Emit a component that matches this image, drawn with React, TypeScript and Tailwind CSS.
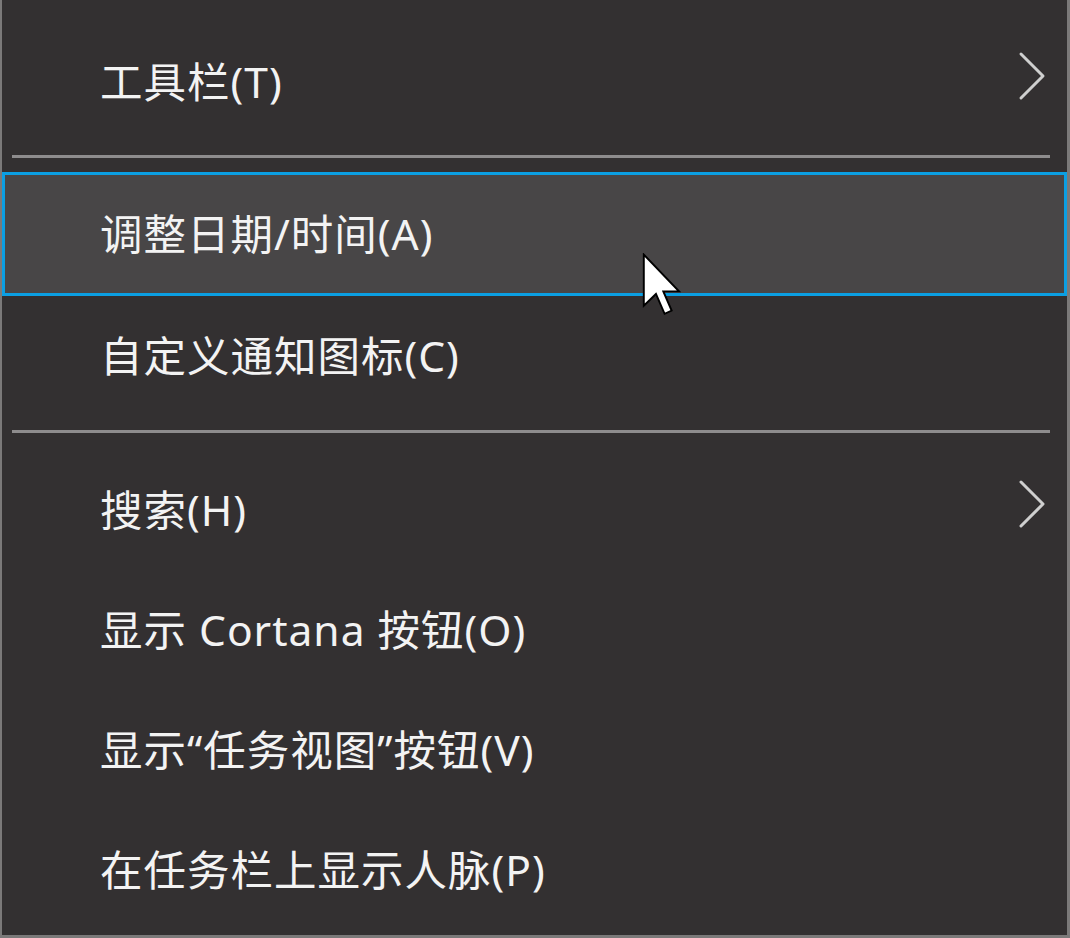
import React from "react";

const font = {
  fontFamily: '"Noto Sans", "Noto Sans CJK SC", sans-serif',
};

type Item = { label: string; sub?: boolean; active?: boolean };

const Chevron: React.FC = () => (
  <svg width="30" height="50" viewBox="0 0 30 50" fill="none">
    <path
      d="M4 3 L26 25 L4 47"
      stroke="#cfcfcf"
      strokeWidth="3"
      strokeLinecap="round"
      strokeLinejoin="round"
    />
  </svg>
);

const Separator: React.FC<{ top: string }> = ({ top }) => (
  <div className={`${top} pl-[10px] pr-[17px]`}>
    <div className="w-full h-[3px] bg-[#8e8c8d]" />
  </div>
);

const Row: React.FC<{ item: Item }> = ({ item }) => (
  <div
    className={
      item.active
        ? "h-[124px] flex items-center justify-between pl-[95px] pr-[17px] bg-[#484647] border-[3px] border-[#0b9fe3]"
        : "h-[120px] flex items-center justify-between pl-[98px] pr-[20px]"
    }
  >
    <span className="text-[42.5px] leading-none text-[#f3f3f3] whitespace-nowrap tracking-[1px]">
      {item.label}
    </span>
    {item.sub && (
      <span className="-mt-[12px]">
        <Chevron />
      </span>
    )}
  </div>
);

export default function App() {
  return (
    <div
      className="relative w-[1070px] h-[938px] bg-[#333031] border-l-2 border-r-[3px] border-b-[3px] border-[#7b7979] pt-[22px] overflow-hidden"
      style={font}
    >
      <Row item={{ label: "工具栏(T)", sub: true }} />
      <Separator top="h-[30px] pt-[13px]" />
      <Row item={{ label: "调整日期/时间(A)", active: true }} />
      <Row item={{ label: "自定义通知图标(C)" }} />
      <Separator top="h-[34px] pt-[14px]" />
      <Row item={{ label: "搜索(H)", sub: true }} />
      <Row item={{ label: "显示 Cortana 按钮(O)" }} />
      <Row item={{ label: "显示“任务视图”按钮(V)" }} />
      <Row item={{ label: "在任务栏上显示人脉(P)" }} />

      {/* mouse pointer over the highlighted row */}
      <svg
        className="absolute left-[640px] top-[253px]"
        width="42"
        height="64"
        viewBox="0 0 13 20"
      >
        <path
          d="M0.5 0.5 L0.5 16.5 L4.3 12.8 L7 19 L9.2 18 L6.6 12 L11.5 12 Z"
          fill="#ffffff"
          stroke="#000000"
          strokeWidth="0.6"
          strokeLinejoin="miter"
        />
      </svg>
    </div>
  );
}
